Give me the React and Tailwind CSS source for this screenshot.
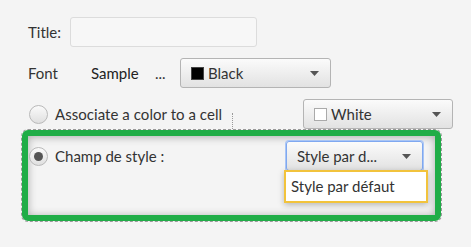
import React from "react";

const font = { fontFamily: "Lato, 'Open Sans', sans-serif" };

const Arrow = () => (
  <svg width="9" height="5" viewBox="0 0 9 5" className="shrink-0">
    <path d="M0 0h9L4.5 5z" fill="#555" />
  </svg>
);

const Combo = ({ children, width, focused }) => (
  <div
    className={`flex items-center h-[30px] ${width} rounded-[3px] border ${
      focused ? "border-[#7fa8f0] shadow-[0_0_0_1px_#a9c5f5]" : "border-[#b4b4b4]"
    } bg-gradient-to-b from-[#fbfbfb] to-[#e2e2e2] pl-[10px] pr-[11px]`}
  >
    <div className="flex items-center gap-[4px] flex-1 text-[15px] text-[#333]">{children}</div>
    <Arrow />
  </div>
);

const Radio = ({ checked }) => (
  <div className="w-[19px] h-[19px] rounded-full border border-[#b9b9b9] bg-gradient-to-b from-[#fafafa] to-[#e0e0e0] flex items-center justify-center shrink-0">
    {checked && <div className="w-[9px] h-[9px] rounded-full bg-[#555]" />}
  </div>
);

export default function App() {
  return (
    <div className="w-[471px] h-[247px] bg-[#f4f4f4] overflow-hidden text-[#333] text-[15px]" style={font}>
      <div className="pt-[17px]">
        <div className="flex items-center h-[30px] pl-[28px]">
          <span className="w-[42px]">Title:</span>
          <div className="w-[187px] h-[30px] rounded-[3px] border border-[#dcdcdc] bg-[#f7f7f7]" />
        </div>

        <div className="flex items-center h-[30px] pl-[28px] mt-[11px]">
          <span className="w-[63px]">Font</span>
          <span className="w-[64px] text-[#222]">Sample</span>
          <span className="w-[25px]">...</span>
          <Combo width="w-[151px]">
            <span className="w-[13px] h-[13px] bg-black border border-[#444]" />
            <span>Black</span>
          </Combo>
        </div>

        <div className="flex items-center h-[30px] pl-[29px] mt-[11px]">
          <Radio />
          <span className="ml-[7px] tracking-[0.05px]">Associate a color to a cell</span>
          <div className="self-end h-[16px] ml-[10px] border-l border-dotted border-[#999]" />
          <div className="ml-[70px]">
            <Combo width="w-[150px]">
              <span className="w-[13px] h-[13px] bg-white border border-[#aaa]" />
              <span>White</span>
            </Combo>
          </div>
        </div>

        <div className="relative ml-[22px] mt-[1px] w-[419px] h-[91px] rounded-[6px] border-[6px] border-[#20ad47] outline outline-1 outline-dashed outline-[#9a9a9a] shadow-[inset_0_1px_9px_rgba(0,0,0,0.3)]">
          <div className="flex items-center pl-[1px] pr-[12px] pt-[5px]">
            <Radio checked />
            <span className="ml-[7px]">Champ de style :</span>
            <div className="ml-auto">
              <Combo width="w-[137px]" focused>
                <span>Style par d...</span>
              </Combo>
            </div>
          </div>
          <div className="absolute left-[256px] top-[34px] w-[144px] h-[33px] bg-white border-2 border-[#f2c33c] flex items-center pl-[5px] shadow-[0_2px_6px_rgba(0,0,0,0.25)]">
            Style par défaut
          </div>
        </div>
      </div>
    </div>
  );
}
